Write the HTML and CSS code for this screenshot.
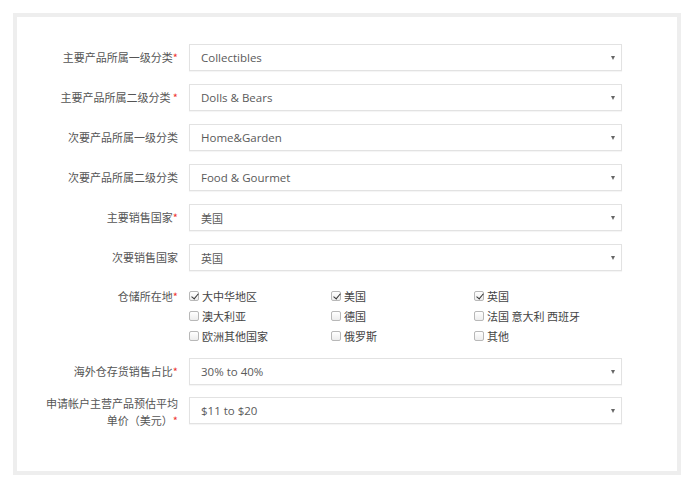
FILE: index.html
```html
<!DOCTYPE html>
<html lang="zh-CN">
<head>
<meta charset="utf-8">
<link rel="stylesheet" href="styles.css">
</head>
<body>
<div class="card">
  <form class="form">
    <div class="row">
      <div class="label">主要产品所属一级分类<span class="req">*</span></div>
      <div class="select"><span>Collectibles</span><i class="arrow"></i></div>
    </div>
    <div class="row">
      <div class="label">主要产品所属二级分类 <span class="req">*</span></div>
      <div class="select"><span>Dolls &amp; Bears</span><i class="arrow"></i></div>
    </div>
    <div class="row">
      <div class="label">次要产品所属一级分类</div>
      <div class="select"><span>Home&amp;Garden</span><i class="arrow"></i></div>
    </div>
    <div class="row">
      <div class="label">次要产品所属二级分类</div>
      <div class="select"><span>Food &amp; Gourmet</span><i class="arrow"></i></div>
    </div>
    <div class="row">
      <div class="label">主要销售国家<span class="req">*</span></div>
      <div class="select"><span class="cjk">美国</span><i class="arrow"></i></div>
    </div>
    <div class="row">
      <div class="label">次要销售国家</div>
      <div class="select"><span class="cjk">英国</span><i class="arrow"></i></div>
    </div>
    <div class="row row-checks">
      <div class="label label-top">仓储所在地<span class="req">*</span></div>
      <div class="checks">
        <label class="check"><span class="box on"></span>大中华地区</label>
        <label class="check"><span class="box on"></span>美国</label>
        <label class="check"><span class="box on"></span>英国</label>
        <label class="check"><span class="box"></span>澳大利亚</label>
        <label class="check"><span class="box"></span>德国</label>
        <label class="check"><span class="box"></span>法国 意大利 西班牙</label>
        <label class="check"><span class="box"></span>欧洲其他国家</label>
        <label class="check"><span class="box"></span>俄罗斯</label>
        <label class="check"><span class="box"></span>其他</label>
      </div>
    </div>
    <div class="row">
      <div class="label">海外仓存货销售占比<span class="req">*</span></div>
      <div class="select"><span>30% to 40%</span><i class="arrow"></i></div>
    </div>
    <div class="row row-wrap">
      <div class="label label-wrap">申请帐户主营产品预估平均<br>单价（美元）<span class="req">*</span></div>
      <div class="select"><span>$11 to $20</span><i class="arrow"></i></div>
    </div>
  </form>
</div>
</body>
</html>
```
FILE: styles.css
```css
* { box-sizing: border-box; }
html, body { margin: 0; padding: 0; background: #fff; }
body {
  width: 692px;
  height: 486px;
  font-family: "Noto Sans CJK SC", "Open Sans", sans-serif;
  color: #555;
}
.card {
  margin: 13px 0 0 13px;
  width: 668px;
  height: 462px;
  border: 4px solid #eeeeee;
  background: #fff;
}
.form {
  display: flex;
  flex-direction: column;
  gap: 13px;
  padding: 27px 0 0 26px;
}
.row {
  display: flex;
  align-items: center;
  gap: 11px;
}
.label {
  width: 135px;
  flex: none;
  text-align: right;
  font-size: 11px;
  line-height: 17px;
  color: #555;
  font-family: "Noto Sans CJK SC", sans-serif;
}
.req { color: #e33; }
.select {
  width: 433px;
  height: 27px;
  flex: none;
  border: 1px solid #e2e2e2;
  box-shadow: 0 1px 1px rgba(0,0,0,0.04);
  display: flex;
  align-items: center;
  justify-content: space-between;
  padding: 0 6px 0 11px;
  font-family: "Open Sans", "Noto Sans CJK SC", sans-serif;
  font-size: 11.5px;
  color: #5a5a5a;
}
.select .cjk { font-family: "Noto Sans CJK SC", sans-serif; font-size: 11px; }
.arrow {
  width: 0;
  height: 0;
  border-left: 2.5px solid transparent;
  border-right: 2.5px solid transparent;
  border-top: 4px solid #666;
}
.row-checks {
  align-items: flex-start;
  margin-top: 2px;
  margin-bottom: -1px;
}
.label-top { line-height: 20px; }
.row-wrap {
  align-items: flex-start;
  margin-top: -1px;
}
.label-wrap { margin-top: -2px; }
.checks {
  display: grid;
  grid-template-columns: 142px 143px 142px;
  grid-auto-rows: 20px;
}
.check {
  display: flex;
  align-items: center;
  gap: 3px;
  font-size: 11px;
  color: #444;
  font-family: "Noto Sans CJK SC", sans-serif;
  white-space: nowrap;
}
.box {
  width: 10px;
  height: 10px;
  border: 1px solid #b8b8b8;
  border-radius: 2px;
  background: linear-gradient(#fff, #ededed);
  position: relative;
  flex: none;
}
.box.on::after {
  content: "";
  position: absolute;
  left: 2.5px;
  top: 0px;
  width: 3px;
  height: 6px;
  border-right: 1.6px solid #333;
  border-bottom: 1.6px solid #333;
  transform: rotate(40deg);
}
```
